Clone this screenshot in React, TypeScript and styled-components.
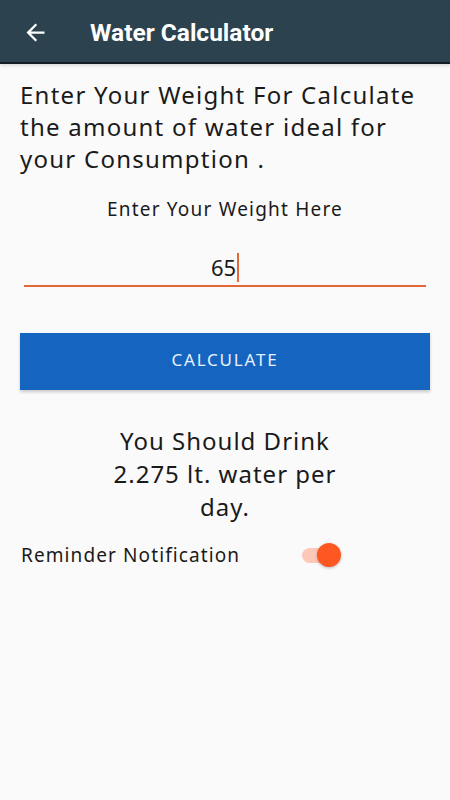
import styled, { createGlobalStyle } from "styled-components";

const GlobalStyle = createGlobalStyle`
  html, body {
    margin: 0;
    padding: 0;
    background: #fafafa;
  }
  #root {
    min-height: 800px;
  }
`;

const Screen = styled.div`
  width: 450px;
  min-height: 800px;
  background: #fafafa;
  font-family: "Noto Sans", "Open Sans", sans-serif;
  color: #1a1a1a;
`;

const AppBar = styled.header`
  height: 62px;
  background: #2c434f;
  border-bottom: 2px solid #141e24;
  box-shadow: 0 2px 3px rgba(0, 0, 0, 0.12);
  display: flex;
  align-items: center;
  padding: 0 21px;
  box-sizing: content-box;
`;

const BackButton = styled.button`
  width: 28px;
  height: 28px;
  padding: 0;
  border: none;
  background: none;
  display: flex;
  align-items: center;
  justify-content: center;
  margin: 2px 41px 0 0;
`;

const Title = styled.h1`
  margin: 2px 0 0;
  font-family: Roboto, "Liberation Sans", sans-serif;
  font-weight: 700;
  font-size: 24.5px;
  color: #ffffff;
`;

const Content = styled.main`
  padding: 15px 20px 0;
  display: flex;
  flex-direction: column;
`;

const Intro = styled.p`
  margin: 0;
  font-size: 24px;
  line-height: 32px;
  letter-spacing: 1.25px;
`;

const FieldLabel = styled.p`
  margin: 21px 0 0;
  text-align: center;
  font-size: 19px;
  letter-spacing: 1.2px;
`;

const Field = styled.div`
  margin: 30px 4px 0;
  border-bottom: 2px solid #e4673a;
  display: flex;
  justify-content: center;
  padding-bottom: 3px;
`;

const FieldValue = styled.span`
  font-size: 22px;
  line-height: 30px;
  display: flex;
  align-items: center;
`;

const Caret = styled.span`
  width: 2px;
  height: 29px;
  background: #e4673a;
  margin-left: 1px;
`;

const PrimaryButton = styled.button`
  margin-top: 46px;
  height: 57px;
  padding: 0 0 4px;
  border: none;
  background: #1565c0;
  color: #e8f1ff;
  font-family: "Noto Sans", sans-serif;
  font-size: 17px;
  letter-spacing: 1.8px;
  box-shadow: 0 2px 3px rgba(0, 0, 0, 0.2);
`;

const Result = styled.p`
  margin: 34px auto 0;
  width: 270px;
  text-align: center;
  font-size: 24px;
  line-height: 33px;
  letter-spacing: 1px;
`;

const Row = styled.div`
  margin-top: 19px;
  display: flex;
  align-items: center;
`;

const RowLabel = styled.span`
  font-size: 19px;
  letter-spacing: 1.1px;
  width: 281px;
  padding-left: 1px;
`;

const Switch = styled.div`
  position: relative;
  width: 40px;
  height: 26px;
  display: flex;
  align-items: center;
`;

const Track = styled.div<{ $on: boolean }>`
  width: 30px;
  height: 15px;
  border-radius: 8px;
  background: ${(p) => (p.$on ? "#fcc9b8" : "#bdbdbd")};
`;

const Thumb = styled.div<{ $on: boolean }>`
  position: absolute;
  top: 1px;
  left: ${(p) => (p.$on ? "15px" : "0")};
  width: 24px;
  height: 24px;
  border-radius: 50%;
  background: ${(p) => (p.$on ? "#ff5722" : "#f5f5f5")};
  box-shadow: 0 1px 3px rgba(0, 0, 0, 0.25);
`;

export default function App() {
  const on = true;
  return (
    <Screen>
      <GlobalStyle />
      <AppBar>
        <BackButton aria-label="back">
          <svg width="27" height="27" viewBox="0 0 24 24">
            <path
              d="M20 11H7.83l5.59-5.59L12 4l-8 8 8 8 1.41-1.41L7.83 13H20v-2z"
              fill="#ffffff"
            />
          </svg>
        </BackButton>
        <Title>Water Calculator</Title>
      </AppBar>
      <Content>
        <Intro>
          Enter Your Weight For Calculate the amount of water ideal for your
          Consumption .
        </Intro>
        <FieldLabel>Enter Your Weight Here</FieldLabel>
        <Field>
          <FieldValue>
            65
            <Caret />
          </FieldValue>
        </Field>
        <PrimaryButton>CALCULATE</PrimaryButton>
        <Result>You Should Drink 2.275 lt. water per day.</Result>
        <Row>
          <RowLabel>Reminder Notification</RowLabel>
          <Switch>
            <Track $on={on} />
            <Thumb $on={on} />
          </Switch>
        </Row>
      </Content>
    </Screen>
  );
}
